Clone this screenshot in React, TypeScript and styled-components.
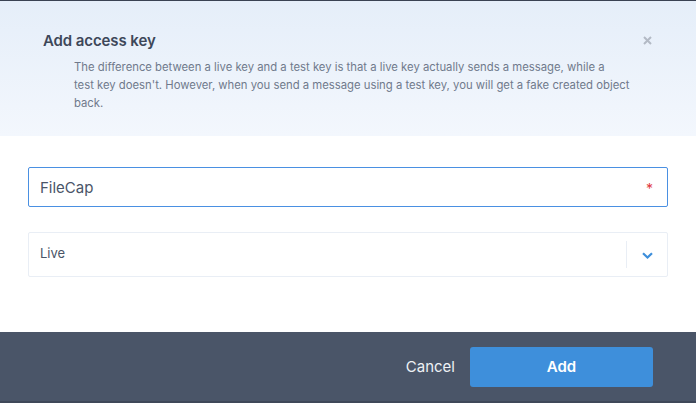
import styled, { createGlobalStyle } from "styled-components";

const GlobalStyle = createGlobalStyle`
  html, body {
    margin: 0;
    padding: 0;
    background: #ffffff;
  }
  body {
    font-family: Inter, "Noto Sans", "Liberation Sans", sans-serif;
  }
  * {
    box-sizing: border-box;
  }
`;

function App() {
  return (
    <>
      <GlobalStyle />
      <Modal>
        <Header>
          <HeaderText>
            <Title>Add access key</Title>
            <Description>
              The difference between a live key and a test key is that a live key actually sends a
              message, while a<br />
              test key doesn't. However, when you send a message using a test key, you will get a
              fake created object<br />
              back.
            </Description>
          </HeaderText>
          <Close aria-label="close">
            <svg width="9" height="9" viewBox="0 0 9 9">
              <path d="M1 1 L8 8 M8 1 L1 8" stroke="#b3bac5" strokeWidth="2" />
            </svg>
          </Close>
        </Header>

        <Body>
          <Field $active>
            <FieldText>FileCap</FieldText>
            <Required>*</Required>
          </Field>
          <Field>
            <SelectText>Live</SelectText>
            <Divider />
            <Chevron>
              <svg width="11" height="7" viewBox="0 0 11 7">
                <path d="M1 1.2 L5.5 5.5 L10 1.2" fill="none" stroke="#3e8fdb" strokeWidth="2.2" />
              </svg>
            </Chevron>
          </Field>
        </Body>

        <Footer>
          <CancelButton>Cancel</CancelButton>
          <AddButton>Add</AddButton>
        </Footer>
      </Modal>
    </>
  );
}
export default App;

const Modal = styled.div`
  width: 696px;
  height: 403px;
  display: flex;
  flex-direction: column;
  border-top: 1px solid #3a4252;
  border-bottom: 2px solid #3f4859;
  overflow: hidden;
`;

const Header = styled.div`
  height: 135px;
  display: flex;
  justify-content: space-between;
  align-items: flex-start;
  padding: 30px 43px 0 43px;
  background: linear-gradient(#e5eef9, #f3f7fd);
`;

const HeaderText = styled.div`
  display: flex;
  flex-direction: column;
`;

const Title = styled.h2`
  margin: 0;
  font-size: 15px;
  font-weight: 600;
  color: #3d4759;
  line-height: 20px;
  letter-spacing: -0.1px;
`;

const Description = styled.p`
  margin: 7px 0 0 31px;
  white-space: nowrap;
  font-size: 11.3px;
  line-height: 18px;
  color: #707a8c;
`;

const Close = styled.div`
  margin-top: 5px;
  margin-right: 1px;
  display: flex;
`;

const Body = styled.div`
  flex: 1;
  background: #ffffff;
  padding: 31px 28px 0 28px;
  display: flex;
  flex-direction: column;
  gap: 25px;
`;

const Field = styled.div<{ $active?: boolean }>`
  height: ${(p) => (p.$active ? "40px" : "45px")};
  border: 1px solid ${(p) => (p.$active ? "#4a90e2" : "#e9eef5")};
  border-radius: 2px;
  display: flex;
  align-items: center;
  padding: 0 0 0 11px;
`;

const FieldText = styled.span`
  flex: 1;
  font-size: 15px;
  color: #4a5568;
`;

const SelectText = styled.span`
  flex: 1;
  font-size: 13px;
  color: #4a5568;
  margin-bottom: 3px;
`;

const Required = styled.span`
  color: #e0393e;
  font-size: 14px;
  margin-right: 14px;
  margin-top: 2px;
`;

const Divider = styled.div`
  width: 1px;
  height: 27px;
  background: #e9eef5;
`;

const Chevron = styled.div`
  width: 40px;
  display: flex;
  justify-content: center;
  padding-top: 2px;
`;

const Footer = styled.div`
  height: 69px;
  background: #4a5568;
  display: flex;
  align-items: center;
  justify-content: flex-end;
  padding-right: 43px;
  gap: 15px;
`;

const CancelButton = styled.button`
  background: none;
  border: none;
  padding: 0;
  font-family: inherit;
  font-size: 15px;
  color: #eef1f5;
  cursor: pointer;
`;

const AddButton = styled.button`
  width: 183px;
  height: 40px;
  border: none;
  border-radius: 3px;
  background: #3e8fdb;
  color: #ffffff;
  font-family: inherit;
  font-size: 15px;
  font-weight: 600;
  cursor: pointer;
`;
